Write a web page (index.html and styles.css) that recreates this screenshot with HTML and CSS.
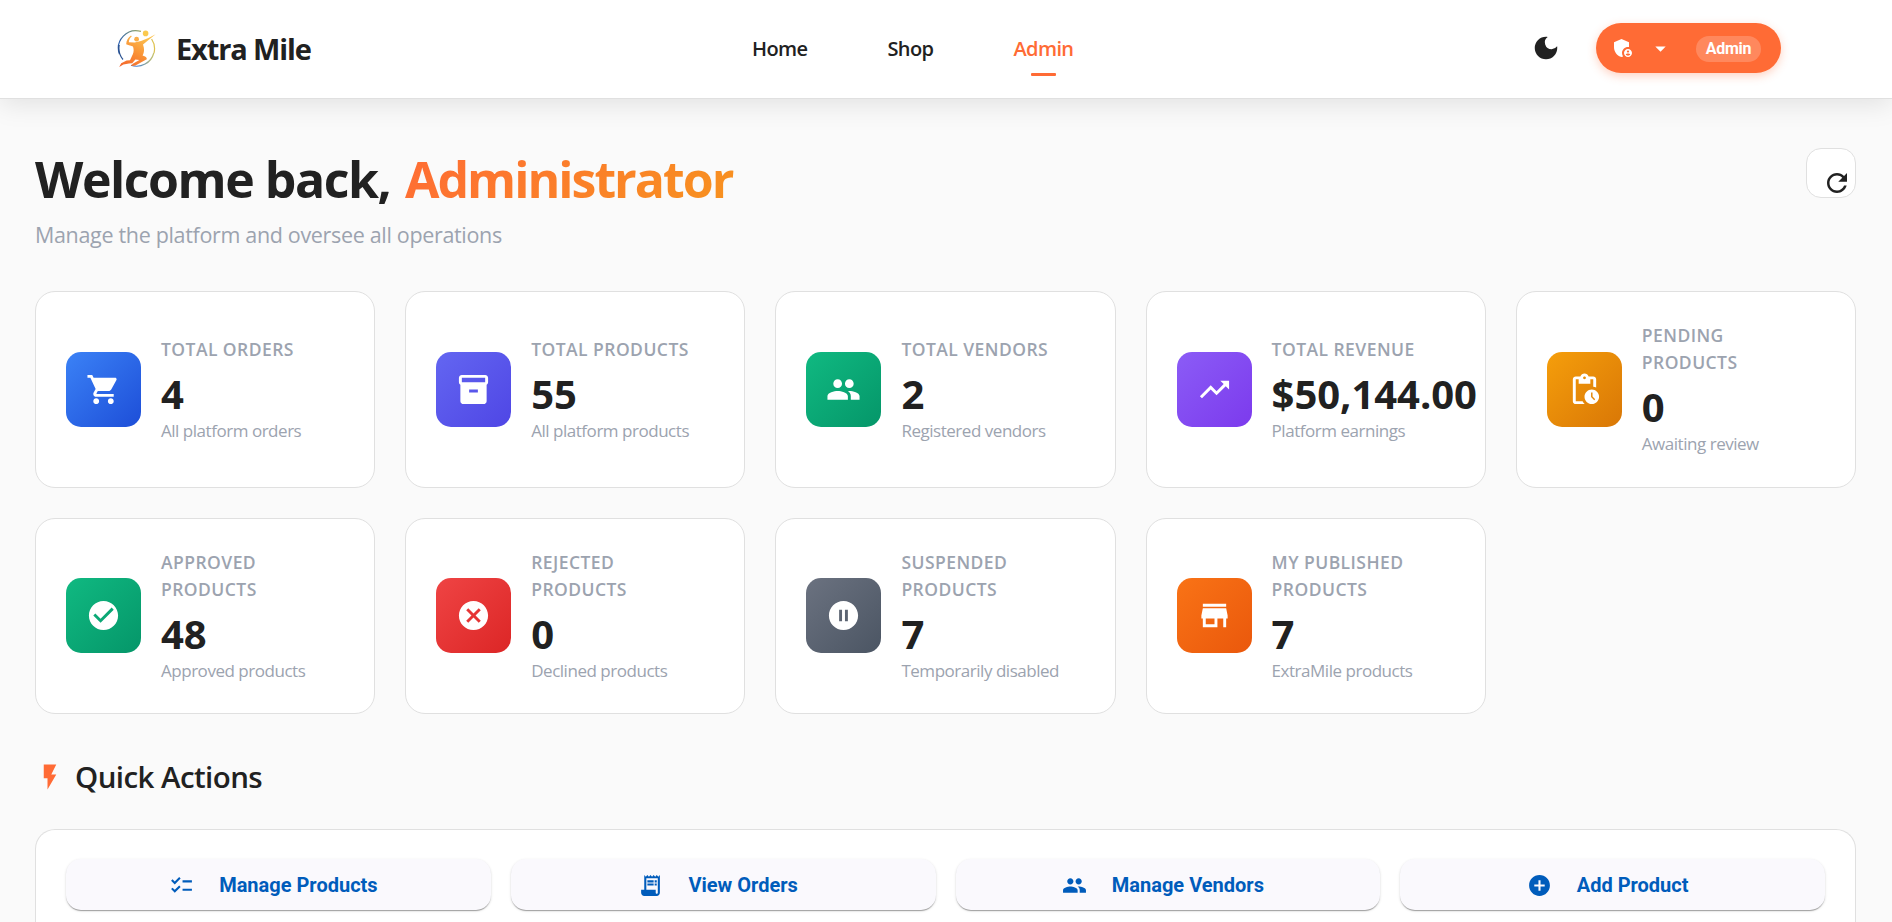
FILE: index.html
```
<!DOCTYPE html>
<html lang="en">
<head>
<meta charset="utf-8">
<title>Extra Mile</title>
<link rel="stylesheet" href="styles.css">
</head>
<body>
<header class="header">
  <a class="brand">
    <svg class="logo" viewBox="0 0 40 40">
      <defs>
        <linearGradient id="ring" x1="0" y1="0.3" x2="1" y2="0.2">
          <stop offset="0" stop-color="#2b5fae"/><stop offset="0.45" stop-color="#7f9a78"/><stop offset="1" stop-color="#e8c64a"/>
        </linearGradient>
        <linearGradient id="ringLow" x1="0" y1="0" x2="1" y2="0">
          <stop offset="0" stop-color="#274b86"/><stop offset="0.5" stop-color="#3f7fd6"/><stop offset="1" stop-color="#c9c36a"/>
        </linearGradient>
        <linearGradient id="body" x1="0" y1="1" x2="0.6" y2="0">
          <stop offset="0" stop-color="#f4622a"/><stop offset="0.5" stop-color="#f98f35"/><stop offset="1" stop-color="#fcc24f"/>
        </linearGradient>
      </defs>
      <path d="M2.4 26A17.6 17.6 0 0 1 24 3.4M34.6 11A17.6 17.6 0 0 1 37 25" fill="none" stroke="url(#ring)" stroke-width="1.2"/>
      <path d="M2.2 17A17.6 17.6 0 0 0 6 31.5M14 37.2A17.6 17.6 0 0 0 36.8 25" fill="none" stroke="url(#ringLow)" stroke-width="1.2"/>
      <circle cx="28.6" cy="5.4" r="2.8" fill="#fac94e"/>
      <circle cx="19.6" cy="11.2" r="2.4" fill="#fbae48"/>
      <path d="M14 7.6C11 9.5 9.4 12.5 9.2 16.2C12 17.3 14.2 17.8 16 18.4C16.8 21 17 23.4 15.8 26.2L13 32.3L9.6 32.6L4.2 35.2L2.2 39L6.4 36.6L12 35.4L15.2 35.2L18.4 31.4L22.4 32L15.8 35.8L13.8 38L18.4 37.4L29.8 31.2C30 29.4 28.6 28.4 25.6 27.4C27.4 24 27.6 21 26 16.4L38.6 6.2L31.4 9.9L24 13L17.6 14.4L11.8 14.3C12 11.6 13 9.8 14.8 8.5Z" fill="url(#body)"/>
    </svg>
    <span class="brand-name">Extra Mile</span>
  </a>
  <nav class="nav">
    <a class="nav-link">Home</a>
    <a class="nav-link">Shop</a>
    <a class="nav-link active">Admin</a>
  </nav>
  <div class="actions">
    <svg class="moon" viewBox="0 0 24 24"><path d="M12 3a9 9 0 1 0 9 9c0-.46-.04-.92-.1-1.36a5.39 5.39 0 0 1-4.4 2.26 5.4 5.4 0 0 1-3.14-9.8C12.92 3.04 12.46 3 12 3z"/></svg>
    <button class="account">
      <svg class="shield" viewBox="0 0 24 24"><path fill-rule="evenodd" d="M17 11c.34 0 .67.04 1 .09V6.27L10.5 3 3 6.27v4.91c0 4.54 3.2 8.79 7.5 9.82.55-.13 1.08-.32 1.6-.55-.69-.98-1.1-2.17-1.1-3.45 0-3.31 2.69-6 6-6zM17 13c-2.21 0-4 1.79-4 4s1.79 4 4 4 4-1.79 4-4-1.79-4-4-4zm0 1.38c.62 0 1.12.51 1.12 1.12s-.51 1.12-1.12 1.12-1.12-.51-1.12-1.12.5-1.12 1.12-1.12zm0 5.37c-.93 0-1.74-.46-2.24-1.17.05-.72 1.51-1.08 2.24-1.08s2.19.36 2.24 1.08c-.5.71-1.31 1.17-2.24 1.17z"/></svg>
      <svg class="caret" viewBox="0 0 24 24"><path d="M7 10l5 5 5-5z"/></svg>
      <span class="badge">Admin</span>
    </button>
  </div>
</header>

<main class="content">
  <section class="welcome">
    <div>
      <h1 class="title">Welcome back, <span class="accent">Administrator</span></h1>
      <p class="subtitle">Manage the platform and oversee all operations</p>
    </div>
    <button class="refresh"><svg viewBox="0 0 24 24"><path d="M17.65 6.35C16.2 4.9 14.21 4 12 4c-4.42 0-7.99 3.58-7.99 8s3.57 8 7.99 8c3.73 0 6.84-2.55 7.73-6h-2.08c-.82 2.33-3.04 4-5.65 4-3.31 0-6-2.69-6-6s2.69-6 6-6c1.66 0 3.14.69 4.22 1.78L13 11h7V4l-2.35 2.35z"/></svg></button>
  </section>

  <section class="stats">
    <article class="card">
      <div class="icon blue"><svg viewBox="0 0 24 24"><path d="M7 18c-1.1 0-1.99.9-1.99 2S5.9 22 7 22s2-.9 2-2-.9-2-2-2zM1 2v2h2l3.6 7.59-1.35 2.45c-.16.28-.25.61-.25.96 0 1.1.9 2 2 2h12v-2H7.42c-.14 0-.25-.11-.25-.25l.03-.12.9-1.63h7.45c.75 0 1.41-.41 1.75-1.03l3.58-6.49c.08-.14.12-.31.12-.48 0-.55-.45-1-1-1H5.21l-.94-2H1zm16 16c-1.1 0-1.99.9-1.99 2s.89 2 1.99 2 2-.9 2-2-.9-2-2-2z"/></svg></div>
      <div class="info"><div class="label">TOTAL ORDERS</div><div class="value">4</div><div class="note">All platform orders</div></div>
    </article>
    <article class="card">
      <div class="icon indigo"><svg viewBox="0 0 24 24"><path d="M20 2H4c-1 0-2 .9-2 2v3.01c0 .72.43 1.34 1 1.69V20c0 1.1 1.1 2 2 2h14c.9 0 2-.9 2-2V8.7c.57-.35 1-.97 1-1.69V4c0-1.1-1-2-2-2zm-5 12H9v-2h6v2zm5-7H4V4l16-.02V7z"/></svg></div>
      <div class="info"><div class="label">TOTAL PRODUCTS</div><div class="value">55</div><div class="note">All platform products</div></div>
    </article>
    <article class="card">
      <div class="icon green"><svg viewBox="0 0 24 24"><path d="M16 11c1.66 0 2.99-1.34 2.99-3S17.66 5 16 5s-3 1.34-3 3 1.34 3 3 3zm-8 0c1.66 0 2.99-1.34 2.99-3S9.66 5 8 5 5 6.34 5 8s1.34 3 3 3zm0 2c-2.33 0-7 1.17-7 3.5V19h14v-2.5c0-2.33-4.67-3.5-7-3.5zm8 0c-.29 0-.62.02-.97.05 1.16.84 1.97 1.97 1.97 3.45V19h6v-2.5c0-2.33-4.67-3.5-7-3.5z"/></svg></div>
      <div class="info"><div class="label">TOTAL VENDORS</div><div class="value">2</div><div class="note">Registered vendors</div></div>
    </article>
    <article class="card">
      <div class="icon violet"><svg viewBox="0 0 24 24"><path d="M16 6l2.29 2.29-4.88 4.88-4-4L2 16.59 3.41 18l6-6 4 4 6.3-6.29L22 12V6z"/></svg></div>
      <div class="info"><div class="label">TOTAL REVENUE</div><div class="value">$50,144.00</div><div class="note">Platform earnings</div></div>
    </article>
    <article class="card">
      <div class="icon amber"><svg viewBox="0 0 24 24"><path d="M17 12c-2.76 0-5 2.24-5 5s2.24 5 5 5 5-2.24 5-5-2.24-5-5-5zm1.65 7.35L16.5 17.2V14h1v2.79l1.85 1.85-.7.71zM18 3h-3.18C14.4 1.84 13.3 1 12 1s-2.4.84-2.82 2H6c-1.1 0-2 .9-2 2v15c0 1.1.9 2 2 2h6.11c-.59-.57-1.07-1.25-1.42-2H6V5h2v3h8V5h2v5.08c.71.1 1.38.31 2 .6V5c0-1.1-.9-2-2-2zm-6 2c-.55 0-1-.45-1-1s.45-1 1-1 1 .45 1 1-.45 1-1 1z"/></svg></div>
      <div class="info"><div class="label">PENDING<br>PRODUCTS</div><div class="value">0</div><div class="note">Awaiting review</div></div>
    </article>
    <article class="card">
      <div class="icon green"><svg viewBox="0 0 24 24"><path d="M12 2C6.48 2 2 6.48 2 12s4.48 10 10 10 10-4.48 10-10S17.52 2 12 2zm-2 15l-5-5 1.41-1.41L10 14.17l7.59-7.59L19 8l-9 9z"/></svg></div>
      <div class="info"><div class="label">APPROVED<br>PRODUCTS</div><div class="value">48</div><div class="note">Approved products</div></div>
    </article>
    <article class="card">
      <div class="icon red"><svg viewBox="0 0 24 24"><path d="M12 2C6.47 2 2 6.47 2 12s4.47 10 10 10 10-4.47 10-10S17.53 2 12 2zm5 13.59L15.59 17 12 13.41 8.41 17 7 15.59 10.59 12 7 8.41 8.41 7 12 10.59 15.59 7 17 8.41 13.41 12 17 15.59z"/></svg></div>
      <div class="info"><div class="label">REJECTED<br>PRODUCTS</div><div class="value">0</div><div class="note">Declined products</div></div>
    </article>
    <article class="card">
      <div class="icon gray"><svg viewBox="0 0 24 24"><path d="M12 2C6.48 2 2 6.48 2 12s4.48 10 10 10 10-4.48 10-10S17.52 2 12 2zm-1 14H9V8h2v8zm4 0h-2V8h2v8z"/></svg></div>
      <div class="info"><div class="label">SUSPENDED<br>PRODUCTS</div><div class="value">7</div><div class="note">Temporarily disabled</div></div>
    </article>
    <article class="card">
      <div class="icon orange"><svg viewBox="0 0 24 24"><path d="M20 4H4v2h16V4zm1 10v-2l-1-5H4l-1 5v2h1v6h10v-6h4v6h2v-6h1zm-9 4H6v-4h6v4z"/></svg></div>
      <div class="info"><div class="label">MY PUBLISHED<br>PRODUCTS</div><div class="value">7</div><div class="note">ExtraMile products</div></div>
    </article>
  </section>

  <h2 class="section-title"><svg viewBox="0 0 24 24"><path d="M7 2v11h3v9l7-12h-4l4-8z"/></svg>Quick Actions</h2>

  <section class="panel">
    <button class="action"><svg viewBox="0 0 24 24"><path d="M22 7h-9v2h9V7zm0 8h-9v2h9v-2zM5.54 11L2 7.46l1.41-1.41 2.12 2.12 4.24-4.24 1.41 1.41L5.54 11zm0 8L2 15.46l1.41-1.41 2.12 2.12 4.24-4.24 1.41 1.41L5.54 19z"/></svg>Manage Products</button>
    <button class="action"><svg viewBox="0 0 24 24"><path fill-rule="evenodd" d="M19.5 3.5L18 2l-1.5 1.5L15 2l-1.5 1.5L12 2l-1.5 1.5L9 2 7.5 3.5 6 2v14H3v3c0 1.66 1.34 3 3 3h12c1.66 0 3-1.34 3-3V2l-1.5 1.5zM19 19c0 .55-.45 1-1 1s-1-.45-1-1v-3H8V5h11v14z"/><path d="M9 7h6v2H9zM16 7h2v2h-2zM9 10h6v2H9zM16 10h2v2h-2z"/></svg>View Orders</button>
    <button class="action"><svg viewBox="0 0 24 24"><path d="M16 11c1.66 0 2.99-1.34 2.99-3S17.66 5 16 5s-3 1.34-3 3 1.34 3 3 3zm-8 0c1.66 0 2.99-1.34 2.99-3S9.66 5 8 5 5 6.34 5 8s1.34 3 3 3zm0 2c-2.33 0-7 1.17-7 3.5V19h14v-2.5c0-2.33-4.67-3.5-7-3.5zm8 0c-.29 0-.62.02-.97.05 1.16.84 1.97 1.97 1.97 3.45V19h6v-2.5c0-2.33-4.67-3.5-7-3.5z"/></svg>Manage Vendors</button>
    <button class="action"><svg viewBox="0 0 24 24"><path d="M12 2C6.48 2 2 6.48 2 12s4.48 10 10 10 10-4.48 10-10S17.52 2 12 2zm5 11h-4v4h-2v-4H7v-2h4V7h2v4h4v2z"/></svg>Add Product</button>
  </section>
</main>
</body>
</html>
```
FILE: styles.css
```
* { box-sizing: border-box; }
body {
  margin: 0;
  height: 100vh;
  overflow: hidden;
  background: #fafafa;
  color: #212121;
  font-family: "Open Sans", "Noto Sans", sans-serif;
}
svg { display: block; flex: none; fill: currentColor; }
button { border: 0; padding: 0; font: inherit; color: inherit; }
h1, h2, p { margin: 0; }

.header {
  display: flex;
  align-items: center;
  height: 99px;
  padding: 0 111px 2px 117px;
  background: #fff;
  border-bottom: 1px solid #e0e0e0;
  box-shadow: 0 5px 25px rgba(0, 0, 0, .1);
}
.brand { display: flex; align-items: center; gap: 19px; width: 635px; }
.logo { width: 40px; height: 40px; }
.brand-name { font-size: 29px; font-weight: 700; letter-spacing: -1.12px; white-space: nowrap; }
.nav { display: flex; gap: 80px; padding-top: 2px; }
.nav-link {
  position: relative;
  font-size: 20px;
  font-weight: 600;
  line-height: 30px;
  letter-spacing: -.6px;
}
.active { color: #ff6b35; }
.active::after {
  content: "";
  position: absolute;
  left: 50%;
  bottom: -12px;
  width: 25px;
  height: 3px;
  margin-left: -12px;
  border-radius: 1px;
  background: #ff6b35;
}
.actions { display: flex; align-items: center; gap: 35px; margin-left: auto; }
.moon { width: 30px; height: 30px; }
.account {
  display: flex;
  align-items: center;
  width: 185px;
  height: 50px;
  padding: 0 20px 0 15px;
  border-radius: 25px;
  background: #ff6b35;
  color: #fff;
  box-shadow: 0 3px 10px rgba(255, 107, 53, .3);
}
.shield { width: 24px; height: 24px; }
.caret { width: 25px; height: 25px; margin-left: 13px; }
.badge {
  width: 65px;
  height: 26px;
  margin: 2px 0 0 auto;
  border-radius: 13px;
  background: rgba(255, 255, 255, .2);
  font: 700 16px/26px Roboto, sans-serif;
  letter-spacing: -.3px;
  text-align: center;
}

.content { padding: 49px 36px 0 35px; }
.welcome { display: flex; justify-content: space-between; align-items: flex-start; }
.title { padding-top: 1px; font-size: 50px; line-height: 60px; font-weight: 700; letter-spacing: -1.45px; white-space: nowrap; }
.accent {
  margin-left: 3px;
  letter-spacing: -2px;
  padding-right: 3px;
  background: linear-gradient(135deg, #ff6b35, #f7931e);
  -webkit-background-clip: text;
  background-clip: text;
  color: transparent;
}
.subtitle { margin-top: 9px; font-size: 21.5px; line-height: 34px; letter-spacing: -.33px; color: #9ca3af; }
.refresh {
  width: 50px;
  height: 50px;
  padding: 19px 0 0 15px;
  border: 1px solid #e0e0e0;
  border-radius: 15px;
  background: #fff;
}
.refresh svg { width: 30px; height: 30px; }

.stats {
  display: grid;
  grid-template-columns: repeat(5, minmax(0, 1fr));
  grid-template-rows: 197px 196px;
  gap: 30px;
  margin-top: 39px;
}
.card {
  display: flex;
  align-items: center;
  gap: 20px;
  padding: 0 30px 1px;
  border: 1px solid #e0e0e0;
  border-radius: 20px;
  background: #fff;
}
.icon {
  display: grid;
  place-items: center;
  flex: none;
  width: 75px;
  height: 75px;
  border-radius: 15px;
  color: #fff;
}
.icon svg { width: 35px; height: 35px; }
.blue { background: linear-gradient(135deg, #3b82f6, #1d4ed8); }
.indigo { background: linear-gradient(135deg, #6366f1, #4f46e5); }
.green { background: linear-gradient(135deg, #10b981, #059669); }
.violet { background: linear-gradient(135deg, #8b5cf6, #7c3aed); }
.amber { background: linear-gradient(135deg, #f59e0b, #d97706); }
.red { background: linear-gradient(135deg, #ef4444, #dc2626); }
.gray { background: linear-gradient(135deg, #6b7280, #4b5563); }
.orange { background: linear-gradient(135deg, #f97316, #ea580c); }
.info { flex: 1; min-width: 0; padding-top: 2.4px; white-space: nowrap; }
.label { font-size: 17.5px; font-weight: 600; line-height: 26.8px; letter-spacing: .45px; color: #9ca3af; }
.value { margin-top: 7.5px; font-size: 40px; font-weight: 700; line-height: 48px; letter-spacing: -.05px; }
.note { font-size: 17px; line-height: 26.6px; letter-spacing: -.47px; color: #9ca3af; }

.section-title {
  display: flex;
  align-items: center;
  gap: 10px;
  margin: 40px 0 30px;
  font-size: 29.5px;
  font-weight: 600;
  line-height: 45px;
  letter-spacing: -.57px;
}
.section-title svg { width: 30px; height: 30px; color: #ff6b35; }

.panel {
  display: grid;
  grid-template-columns: repeat(4, 1fr);
  gap: 20px;
  height: 93px;
  padding: 29px 30px 0;
  border: 1px solid #e0e0e0;
  border-bottom: 0;
  border-radius: 20px 20px 0 0;
  background: #fff;
}
.action {
  display: flex;
  align-items: center;
  justify-content: center;
  gap: 25px;
  height: 51px;
  padding: 1px 10px 0 0;
  border-radius: 15px;
  background: #faf9fd;
  color: #005cbb;
  font: 700 20px/28px Roboto, sans-serif;
  box-shadow: 0 2px 1px -1px rgba(0, 0, 0, .2), 0 1px 1px rgba(0, 0, 0, .14), 0 1px 3px rgba(0, 0, 0, .12);
}
.action svg { width: 25px; height: 25px; }
```
